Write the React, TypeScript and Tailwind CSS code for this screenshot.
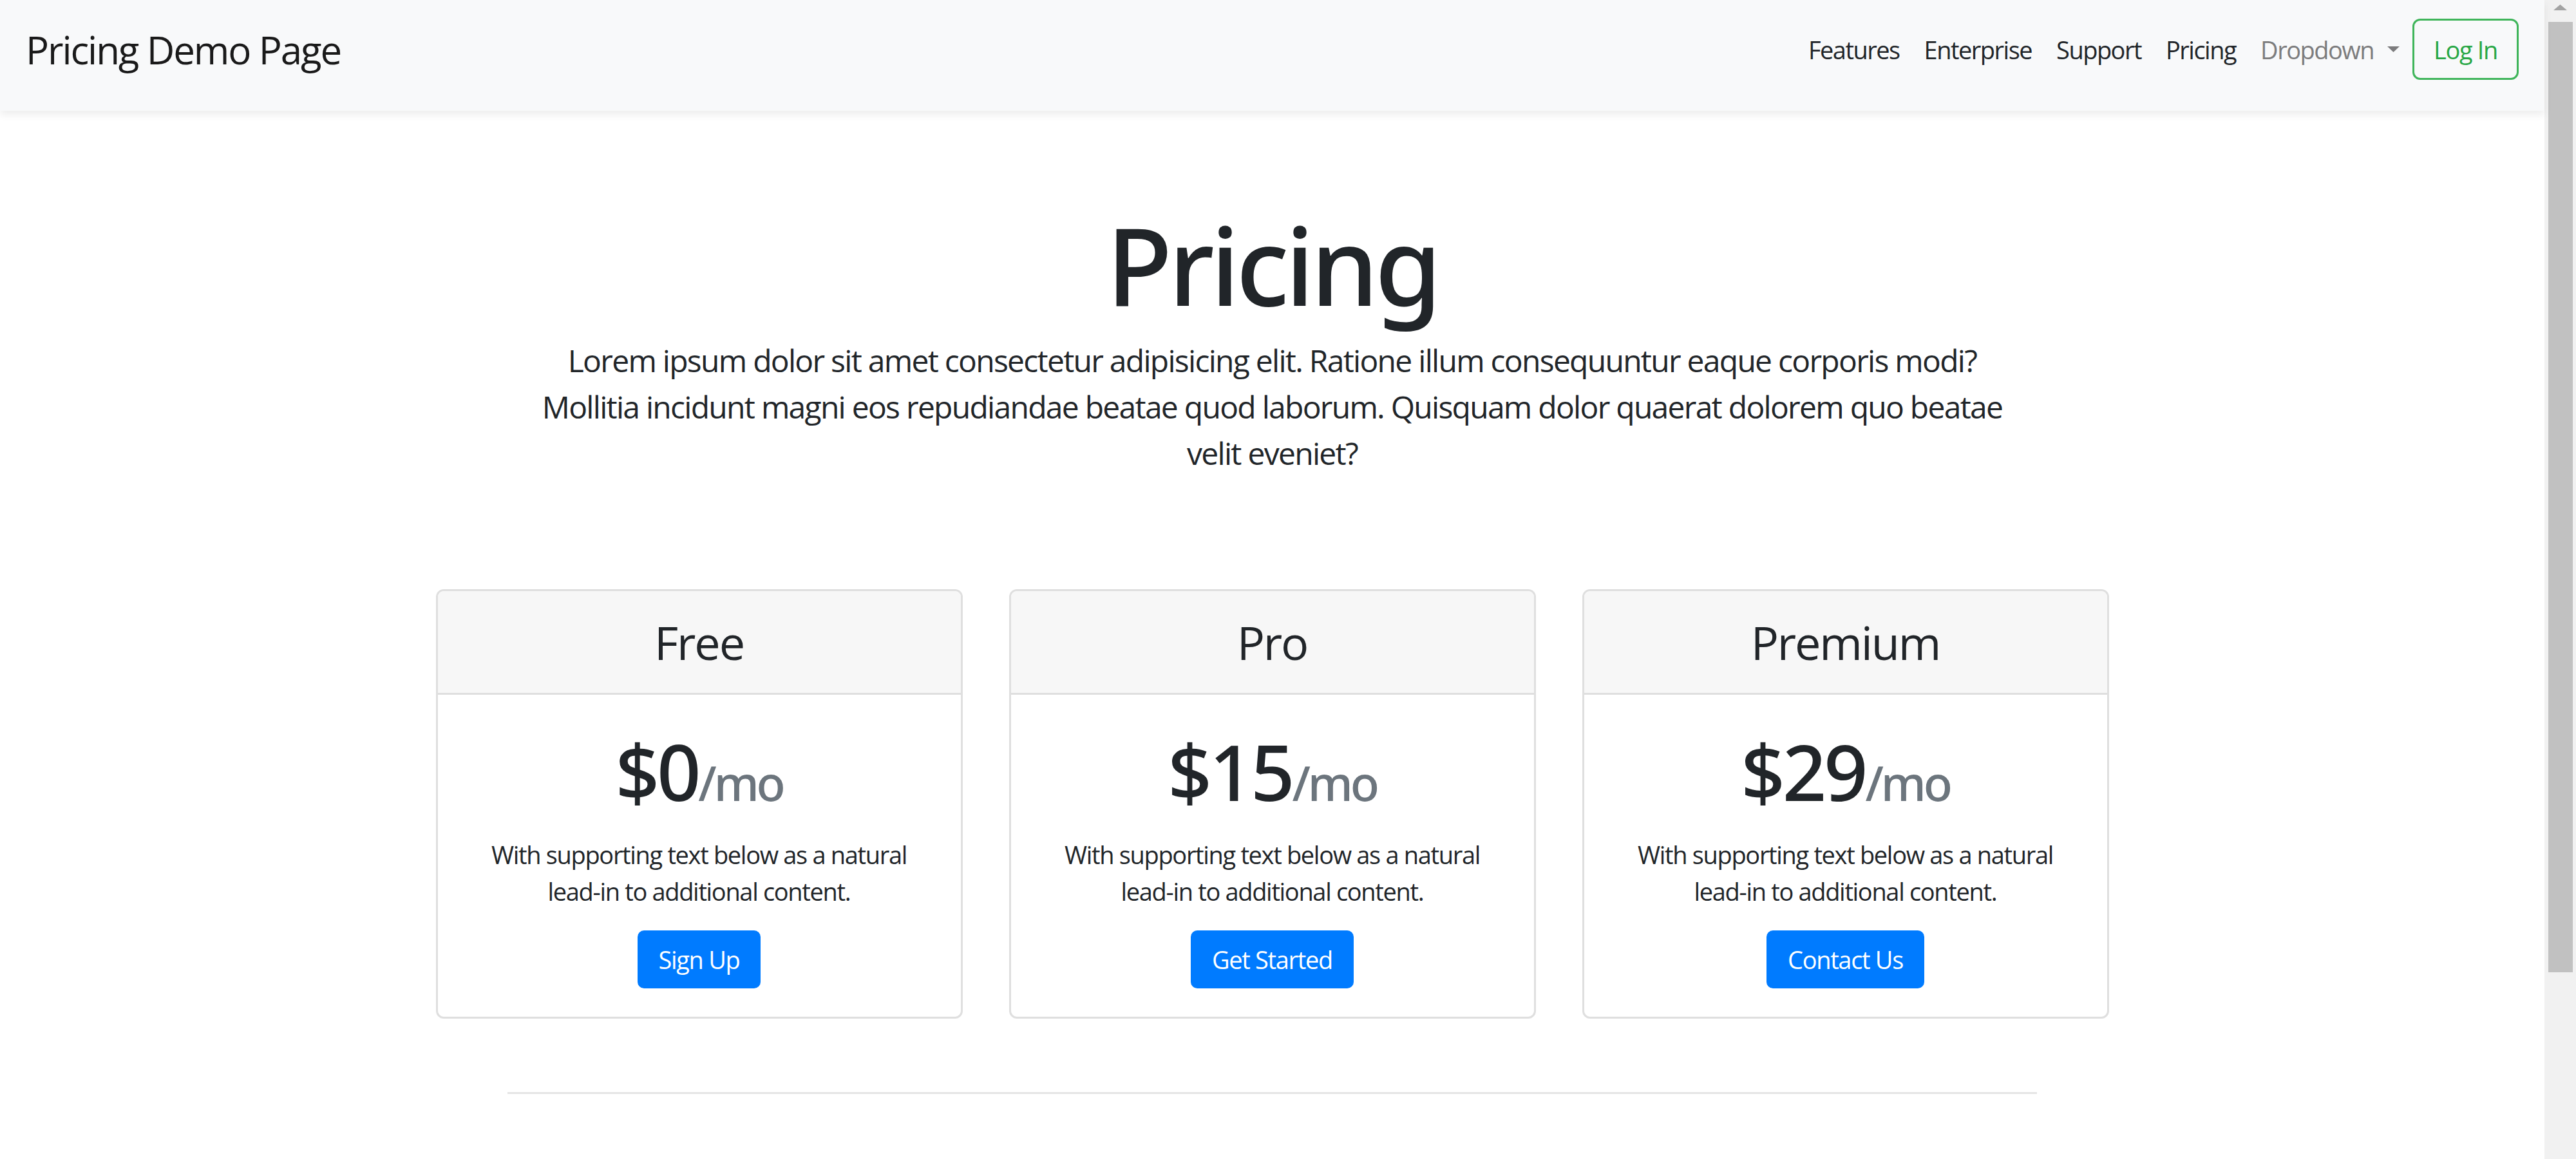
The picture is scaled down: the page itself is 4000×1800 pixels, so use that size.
import React from 'react'

const plans = [
    { name: 'Free', price: '$0', cta: 'Sign Up' },
    { name: 'Pro', price: '$15', cta: 'Get Started' },
    { name: 'Premium', price: '$29', cta: 'Contact Us' },
]

const links = ['Features', 'Enterprise', 'Support', 'Pricing']

function Navbar() {
    return (
        <nav className='relative z-10 flex h-[172px] items-center justify-between bg-[#f8f9fa] px-[40px] pt-[29px] pb-[48px] shadow-[0_6px_12px_rgba(0,0,0,0.075)]'>
            <a href='#' className='text-[60px] leading-none tracking-[-0.035em] text-[#1a1a1a]'>Pricing Demo Page</a>
            <div className='flex items-center'>
                <ul className='flex items-center gap-[38px] text-[38px] leading-none tracking-[-0.04em]'>
                    {links.map((link) => (
                        <li key={link}><a href='#' className='text-[#212529]'>{link}</a></li>
                    ))}
                    <li className='flex items-center gap-[21px] text-[#7c7c7d]'>
                        <a href='#'>Dropdown</a>
                        <svg width='19' height='9' viewBox='0 0 19 9'><polygon points='0,0 19,0 9.5,9' fill='#7c7c7d' /></svg>
                    </li>
                </ul>
                <button type='button' className='ml-[20px] h-[95px] w-[165px] rounded-[12px] border-[3px] border-[#3fb55a] text-[38px] leading-none tracking-[-0.035em] text-[#28a745]'>Log In</button>
            </div>
        </nav>
    )
}

function PlanCard({ name, price, cta }: { name: string, price: string, cta: string }) {
    return (
        <div className='overflow-hidden rounded-[12px] border-[3px] border-[#dfdfdf] bg-white text-center'>
            <div className='border-b-[3px] border-[#dfdfdf] bg-[#f7f7f7] py-[36px]'>
                <h4 className='text-[72px] leading-[86px] tracking-[-0.03em] text-[#212529]'>{name}</h4>
            </div>
            <div className='flex flex-col items-center pt-[47px] pb-[44px]'>
                <h1 className="font-['Noto_Sans',sans-serif] text-[120px] leading-[144px] font-[500] tracking-[-0.035em] text-[#212529]">
                    {price}<small className='text-[74px] leading-none text-[#6c757d]'>/mo</small>
                </h1>
                <p className='mt-[29px] text-[38px] leading-[57px] tracking-[-0.035em] text-[#212529]'>
                    With supporting text below as a natural<br />lead-in to additional content.
                </p>
                <button type='button' className='mt-[32px] h-[90px] rounded-[10px] bg-[#007bff] px-[33px] text-[38px] leading-none tracking-[-0.035em] text-white'>{cta}</button>
            </div>
        </div>
    )
}

function Scrollbar() {
    return (
        <div className='flex h-full w-[49px] shrink-0 flex-col items-center bg-[#f1f1f1]'>
            <svg className='mt-[7px]' width='21' height='9' viewBox='0 0 21 9'><polygon points='10.5,0 21,9 0,9' fill='#a3a3a3' /></svg>
            <div className='mt-[18px] h-[1476px] w-[38px] bg-[#c1c1c1]' />
        </div>
    )
}

export default function App() {
    return (
        <div className="flex h-[1800px] w-full overflow-hidden bg-white font-['Open_Sans',sans-serif]">
            <div className='flex min-w-0 flex-1 flex-col'>
                <Navbar />
                <header className='pt-[137px] text-center text-[#212529]'>
                    <h1 className="font-['Noto_Sans',sans-serif] text-[168px] leading-[1.2] font-[500] tracking-[-0.035em]">Pricing</h1>
                    <p className='mt-[13px] text-[48px] leading-[72px] tracking-[-0.036em]'>
                        Lorem ipsum dolor sit amet consectetur adipisicing elit. Ratione illum consequuntur eaque corporis modi?<br />
                        Mollitia incidunt magni eos repudiandae beatae quod laborum. Quisquam dolor quaerat dolorem quo beatae<br />
                        velit eveniet?
                    </p>
                </header>
                <div className='mx-auto mt-[175px] grid w-[2598px] grid-cols-3 gap-[72px]'>
                    {plans.map((plan) => (
                        <PlanCard key={plan.name} {...plan} />
                    ))}
                </div>
                <hr className='mx-auto mt-[114px] w-[2375px] border-t-[3px] border-[#e5e5e5]' />
            </div>
            <Scrollbar />
        </div>
    )
}
